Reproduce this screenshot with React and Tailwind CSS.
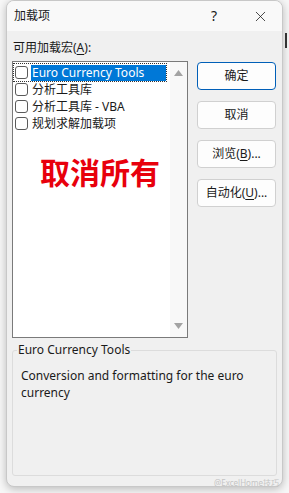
import React from 'react';
import { X } from 'lucide-react';

const items = [
  { label: 'Euro Currency Tools', selected: true },
  { label: '分析工具库' },
  { label: '分析工具库 - VBA' },
  { label: '规划求解加载项' },
];

const buttons = [
  { label: '确定', primary: true },
  { label: '取消' },
  { label: '浏览(B)...', u: 'B' },
  { label: '自动化(U)...', u: 'U' },
];

const Label = ({ text, u }) => {
  if (!u) return text;
  const i = text.indexOf('(' + u + ')');
  return (
    <>
      {text.slice(0, i + 1)}
      <span className="underline underline-offset-2">{u}</span>
      {text.slice(i + 2)}
    </>
  );
};

const App = () => {
  return (
    <div
      className="w-[289px] h-[493px] relative overflow-hidden bg-[#f7f7f7] text-[12px] text-[#1a1a1a]"
      style={{ fontFamily: '"Noto Sans", "Noto Sans CJK SC", sans-serif' }}
    >
      {/* sheet cursor behind the dialog */}
      <div className="absolute left-[285px] top-[33px] w-[2px] h-[15px] bg-[#333]" />

      <div className="ml-[6px] w-[277px] h-[487px] rounded-[8px] border border-[#c8c8c8] shadow-[0_2px_8px_rgba(0,0,0,0.25)] overflow-hidden flex flex-col bg-[#f0f0f0]">
        {/* title bar */}
        <div className="h-[30px] shrink-0 bg-[#f9f9f9] flex items-center pl-[7px]">
          <span className="flex-1 leading-none">加载项</span>
          <span className="w-[16px] text-center text-[14px] leading-none mr-[30px]">?</span>
          <X size={17} strokeWidth={1.1} className="mr-[13px]" />
        </div>

        {/* body */}
        <div className="flex-1 flex flex-col px-[5px] pt-[9px]">
          <div className="h-[16px] leading-[16px] pl-[1px]">
            可用加载宏(<span className="underline underline-offset-2">A</span>):
          </div>

          <div className="flex gap-[9px] mt-[5px]">
            {/* list */}
            <div className="w-[176px] h-[277px] border border-[#7a7a7a] bg-white flex">
              <div className="flex-1 flex flex-col pt-[2px] pl-[1px]">
                {items.map((it) => (
                  <div
                    key={it.label}
                    className={`h-[17px] flex items-center gap-[3px] ${it.selected ? 'outline outline-1 outline-dotted outline-[#333] w-[152px]' : ''}`}
                  >
                    <div className="w-[13px] h-[13px] ml-[1px] rounded-[3px] border border-[#5a5a5a] bg-white shrink-0" />
                    <span
                      className={`h-[16px] leading-[16px] px-[1px] whitespace-nowrap ${it.selected ? 'bg-[#0078d7] text-white flex-1' : ''}`}
                    >
                      {it.label}
                    </span>
                  </div>
                ))}
                <div className="mt-[25px] pl-[26px] text-[30px] font-bold leading-[32px] text-[#e8000c]">
                  取消所有
                </div>
              </div>
              {/* scrollbar */}
              <div className="w-[17px] bg-[#f8f8f8] flex flex-col items-center justify-between py-[8px]">
                <svg width="9" height="6" viewBox="0 0 9 6">
                  <path d="M0 6 L4.5 0 L9 6 Z" fill="#a3a3a3" />
                </svg>
                <svg width="9" height="6" viewBox="0 0 9 6">
                  <path d="M0 0 L4.5 6 L9 0 Z" fill="#a3a3a3" />
                </svg>
              </div>
            </div>

            {/* buttons */}
            <div className="flex flex-col gap-[11px] pt-[1px]">
              {buttons.map((b) => (
                <div
                  key={b.label}
                  className={`w-[79px] h-[28px] rounded-[4px] bg-[#fdfdfd] flex items-center justify-center ${b.primary ? 'border-[1.5px] border-[#005fb8]' : 'border border-[#d0d0d0]'}`}
                >
                  <Label text={b.label} u={b.u} />
                </div>
              ))}
            </div>
          </div>

          {/* description group */}
          <div className="relative mt-[12px] w-[265px] h-[126px] border border-[#dcdcdc] rounded-[3px]">
            <div className="absolute -top-[9px] left-[4px] bg-[#f0f0f0] px-[1px] leading-[16px]">
              Euro Currency Tools
            </div>
            <div className="pt-[17px] pl-[8px] pr-[10px] leading-[16.5px]">
              Conversion and formatting for the euro currency
            </div>
          </div>
        </div>
      </div>

      {/* watermark */}
      <div className="absolute left-[214px] top-[478px] text-[8px] leading-[10px] text-[#c4c4c4] whitespace-nowrap">
        @ExcelHome技巧
      </div>
    </div>
  );
};

export default App;
